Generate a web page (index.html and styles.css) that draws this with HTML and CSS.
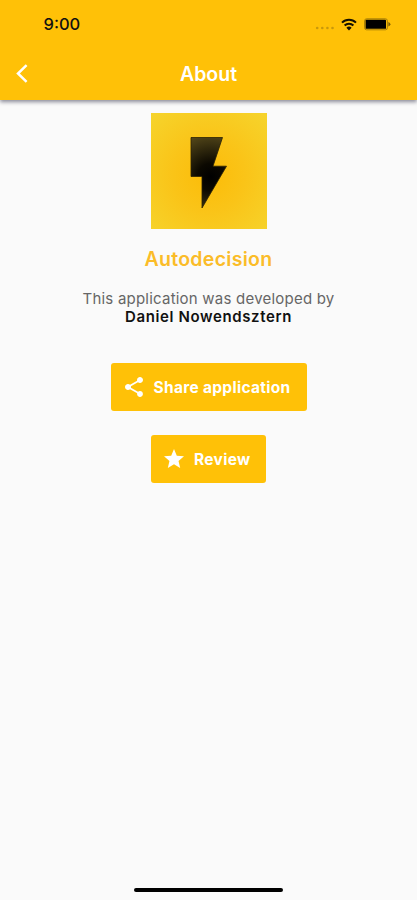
FILE: index.html
```html
<!DOCTYPE html>
<html lang="en">

<head>
    <meta charset="UTF-8">
    <meta name="viewport" content="width=device-width, initial-scale=1">
    <title>About</title>
    <link rel="stylesheet" href="styles.css">
</head>

<body>
    <header class="app-bar">
        <div class="status-bar">
            <span class="time">9:00</span>
            <div class="status-icons">
                <svg class="signal" width="20" height="4" viewBox="0 0 20 4">
                    <circle cx="2.2" cy="2" r="1.3" />
                    <circle cx="7.3" cy="2" r="1.3" />
                    <circle cx="12.4" cy="2" r="1.3" />
                    <circle cx="17.5" cy="2" r="1.3" />
                </svg>
                <svg class="wifi" width="16" height="13" viewBox="0 0 16 13">
                    <path d="M1 4.6a10 10 0 0 1 14 0M3.6 7.5a6.2 6.2 0 0 1 8.8 0" />
                    <path class="wifi-dot" d="M8 12.4 5.4 9.8a3.7 3.7 0 0 1 5.2 0z" />
                </svg>
                <svg class="battery" width="27" height="13" viewBox="0 0 27 13">
                    <rect class="battery-case" x="0.6" y="0.8" width="22.8" height="11" rx="2" />
                    <rect x="1.6" y="1.8" width="20.4" height="9" rx="0.6" />
                    <path class="battery-tip" d="M24.4 4q2 1 2 2.3t-2 2.3z" />
                </svg>
            </div>
        </div>
        <div class="toolbar">
            <button class="back" type="button" aria-label="Back">
                <svg width="14" height="20" viewBox="0 0 14 20">
                    <path d="M11.6 1.2 3 9.5l8.6 8.3" />
                </svg>
            </button>
            <h1>About</h1>
        </div>
    </header>

    <main class="content">
        <svg class="logo" viewBox="0 0 116 116">
            <defs>
                <radialGradient id="tile" cx="0.5" cy="0.54" r="0.7">
                    <stop offset="0" stop-color="#fcbc08" />
                    <stop offset="0.45" stop-color="#fac418" />
                    <stop offset="1" stop-color="#f6d32b" />
                </radialGradient>
                <radialGradient id="bolt" gradientUnits="userSpaceOnUse" cx="60" cy="64" r="46">
                    <stop offset="0" stop-color="#000000" />
                    <stop offset="0.3" stop-color="#0c0901" />
                    <stop offset="1" stop-color="#5a4d1c" />
                </radialGradient>
            </defs>
            <rect width="116" height="116" fill="url(#tile)" />
            <path d="M40 24.5h31.5L62 53.2h13.5L51 95V63.5H40z" fill="url(#bolt)" stroke="#2b2202" stroke-width="0.8" />
        </svg>
        <h2>Autodecision</h2>
        <p class="credits">This application was developed by<br><strong>Daniel Nowendsztern</strong></p>
        <button class="btn btn-share" type="button">
            <svg width="24" height="24" viewBox="0 0 24 24">
                <path d="M18 16.08c-.76 0-1.44.3-1.96.77L8.91 12.7c.05-.23.09-.46.09-.7s-.04-.47-.09-.7l7.05-4.11c.54.5 1.25.81 2.04.81 1.66 0 3-1.34 3-3s-1.34-3-3-3-3 1.34-3 3c0 .24.04.47.09.7L8.04 9.81C7.5 9.31 6.79 9 6 9c-1.66 0-3 1.34-3 3s1.34 3 3 3c.79 0 1.5-.31 2.04-.81l7.12 4.16c-.05.21-.08.43-.08.65 0 1.61 1.31 2.92 2.92 2.92s2.92-1.31 2.92-2.92-1.31-2.92-2.92-2.92z" />
            </svg>
            <span>Share application</span>
        </button>
        <button class="btn btn-review" type="button">
            <svg width="24" height="24" viewBox="0 0 24 24">
                <path d="M12 17.27 18.18 21l-1.64-7.03L22 9.24l-7.19-.61L12 2 9.19 8.63 2 9.24l5.46 4.73L5.82 21z" />
            </svg>
            <span>Review</span>
        </button>
    </main>

    <div class="home-indicator"></div>
</body>

</html>
```

FILE: styles.css
```css
* {
    box-sizing: border-box;
}

body {
    display: flex;
    flex-direction: column;
    height: 900px;
    margin: 0;
    background: #fafafa;
    font-family: Inter, "Liberation Sans", sans-serif;
    overflow: hidden;
}

svg {
    display: block;
}

/* Header */
.app-bar {
    height: 100px;
    background: #ffc107;
    box-shadow: 0 2px 4px rgba(0, 0, 30, 0.45);
}

.status-bar {
    display: flex;
    justify-content: space-between;
    height: 48px;
    padding: 0 26px 0 43.5px;
}

.time {
    line-height: 48px;
    font-size: 16.5px;
    font-weight: 500;
    color: #111;
}

.status-icons {
    display: flex;
    align-items: center;
}

.signal {
    margin: 8px 6px 0 0;
    fill: #c8980c;
}

.wifi {
    margin-right: 7px;
    fill: none;
    stroke: #151000;
    stroke-width: 2;
}

.wifi-dot {
    fill: #151000;
    stroke: none;
}

.battery {
    fill: #000;
}

.battery-case {
    fill: none;
    stroke: #a87f08;
}

.battery-tip {
    fill: #7a5c04;
}

.toolbar {
    display: grid;
    grid-template-columns: 44px 1fr 44px;
    align-items: center;
    height: 51px;
}

.back {
    padding: 0 0 0 15px;
    border: none;
    background: none;
    cursor: pointer;
}

.back path {
    fill: none;
    stroke: #fff;
    stroke-width: 2.5;
}

h1 {
    margin: 0;
    text-align: center;
    font-size: 19.5px;
    font-weight: 600;
    color: #fff;
}

/* Content */
.content {
    display: flex;
    flex: 1;
    flex-direction: column;
    align-items: center;
    padding-top: 13px;
}

.logo {
    width: 116px;
    height: 116px;
}

h2 {
    margin: 18px 0 0;
    line-height: 24px;
    font-size: 19.5px;
    font-weight: 600;
    letter-spacing: 0.3px;
    color: #fbbc28;
}

.credits {
    margin: 19px 0 0;
    text-align: center;
    line-height: 18px;
    font-size: 15px;
    letter-spacing: 0.22px;
    color: #666;
}

.credits strong {
    font-weight: 600;
    letter-spacing: 0.62px;
    color: #111;
}

.btn {
    display: flex;
    align-items: center;
    gap: 8px;
    height: 48px;
    padding: 0 11px;
    border: none;
    border-radius: 3px;
    background: #ffc107;
    font-family: inherit;
    font-size: 15.5px;
    font-weight: 700;
    letter-spacing: 0.3px;
    color: #fff;
    cursor: pointer;
}

.btn svg {
    fill: #fff;
}

.btn-share {
    width: 196px;
    margin-top: 37px;
}

.btn-review {
    width: 115px;
    margin-top: 24px;
}

.home-indicator {
    width: 149px;
    height: 4px;
    margin: 0 auto 8px;
    border-radius: 2px;
    background: #000;
}
```
